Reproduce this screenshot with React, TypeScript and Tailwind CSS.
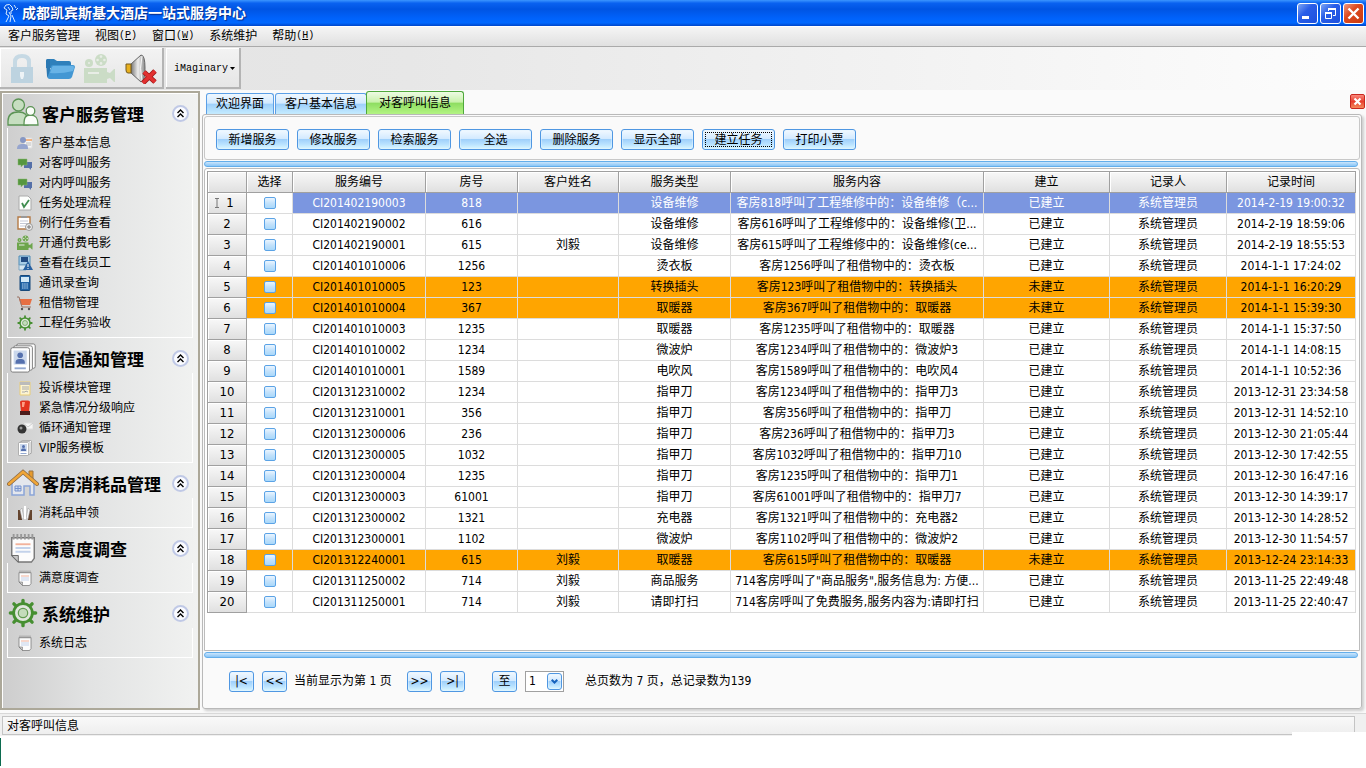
import React, { useState } from 'react';

const menus = [
  { label: '客户服务管理' },
  { label: '视图', hotkey: 'P' },
  { label: '窗口', hotkey: 'W' },
  { label: '系统维护' },
  { label: '帮助', hotkey: 'H' },
];

const sections = [
  {
    title: '客户服务管理',
    icon: 'users',
    items: [
      { icon: 'contact', label: '客户基本信息' },
      { icon: 'chat', label: '对客呼叫服务' },
      { icon: 'chat', label: '对内呼叫服务' },
      { icon: 'check', label: '任务处理流程' },
      { icon: 'clipboard', label: '例行任务查看' },
      { icon: 'camera', label: '开通付费电影' },
      { icon: 'online', label: '查看在线员工' },
      { icon: 'phone', label: '通讯录查询' },
      { icon: 'cart', label: '租借物管理' },
      { icon: 'gear', label: '工程任务验收' },
    ],
  },
  {
    title: '短信通知管理',
    icon: 'cards',
    items: [
      { icon: 'memo', label: '投诉模块管理' },
      { icon: 'alarm', label: '紧急情况分级响应' },
      { icon: 'loop', label: '循环通知管理' },
      { icon: 'cards', label: 'VIP服务模板' },
    ],
  },
  {
    title: '客房消耗品管理',
    icon: 'house',
    items: [{ icon: 'supplies', label: '消耗品申领' }],
  },
  {
    title: '满意度调查',
    icon: 'notepad',
    items: [{ icon: 'notepad', label: '满意度调查' }],
  },
  {
    title: '系统维护',
    icon: 'gear',
    items: [{ icon: 'notepad', label: '系统日志' }],
  },
];

const tabs = ['欢迎界面', '客户基本信息', '对客呼叫信息'];

const actions = ['新增服务', '修改服务', '检索服务', '全选', '删除服务', '显示全部', '建立任务', '打印小票'];

const columns = [
  { title: '选择', width: 'w-[46px]' },
  { title: '服务编号', width: 'w-[133px]' },
  { title: '房号', width: 'w-[92px]' },
  { title: '客户姓名', width: 'w-[101px]' },
  { title: '服务类型', width: 'w-[112px]' },
  { title: '服务内容', width: 'w-[253px]' },
  { title: '建立', width: 'w-[126px]' },
  { title: '记录人', width: 'w-[117px]' },
  { title: '记录时间', width: 'w-[129px]' },
];

// code, room, guest, type, content, status, time
const calls = [
  ['CI201402190003', '818', '', '设备维修', '客房818呼叫了工程维修中的：设备维修（c...', '已建立', '2014-2-19 19:00:32'],
  ['CI201402190002', '616', '', '设备维修', '客房616呼叫了工程维修中的：设备维修(卫...', '已建立', '2014-2-19 18:59:06'],
  ['CI201402190001', '615', '刘毅', '设备维修', '客房615呼叫了工程维修中的：设备维修(ce...', '已建立', '2014-2-19 18:55:53'],
  ['CI201401010006', '1256', '', '烫衣板', '客房1256呼叫了租借物中的：烫衣板', '已建立', '2014-1-1 17:24:02'],
  ['CI201401010005', '123', '', '转换插头', '客房123呼叫了租借物中的：转换插头', '未建立', '2014-1-1 16:20:29'],
  ['CI201401010004', '367', '', '取暖器', '客房367呼叫了租借物中的：取暖器', '未建立', '2014-1-1 15:39:30'],
  ['CI201401010003', '1235', '', '取暖器', '客房1235呼叫了租借物中的：取暖器', '已建立', '2014-1-1 15:37:50'],
  ['CI201401010002', '1234', '', '微波炉', '客房1234呼叫了租借物中的：微波炉3', '已建立', '2014-1-1 14:08:15'],
  ['CI201401010001', '1589', '', '电吹风', '客房1589呼叫了租借物中的：电吹风4', '已建立', '2014-1-1 10:52:36'],
  ['CI201312310002', '1234', '', '指甲刀', '客房1234呼叫了租借物中的：指甲刀3', '已建立', '2013-12-31 23:34:58'],
  ['CI201312310001', '356', '', '指甲刀', '客房356呼叫了租借物中的：指甲刀', '已建立', '2013-12-31 14:52:10'],
  ['CI201312300006', '236', '', '指甲刀', '客房236呼叫了租借物中的：指甲刀3', '已建立', '2013-12-30 21:05:44'],
  ['CI201312300005', '1032', '', '指甲刀', '客房1032呼叫了租借物中的：指甲刀10', '已建立', '2013-12-30 17:42:55'],
  ['CI201312300004', '1235', '', '指甲刀', '客房1235呼叫了租借物中的：指甲刀1', '已建立', '2013-12-30 16:47:16'],
  ['CI201312300003', '61001', '', '指甲刀', '客房61001呼叫了租借物中的：指甲刀7', '已建立', '2013-12-30 14:39:17'],
  ['CI201312300002', '1321', '', '充电器', '客房1321呼叫了租借物中的：充电器2', '已建立', '2013-12-30 14:28:52'],
  ['CI201312300001', '1102', '', '微波炉', '客房1102呼叫了租借物中的：微波炉2', '已建立', '2013-12-30 11:54:57'],
  ['CI201312240001', '615', '刘毅', '取暖器', '客房615呼叫了租借物中的：取暖器', '未建立', '2013-12-24 23:14:33'],
  ['CI201311250002', '714', '刘毅', '商品服务', '714客房呼叫了"商品服务",服务信息为: 方便...', '已建立', '2013-11-25 22:49:48'],
  ['CI201311250001', '714', '刘毅', '请即打扫', '714客房呼叫了免费服务,服务内容为:请即打扫', '已建立', '2013-11-25 22:40:47'],
];

const glossy =
  'rounded-[3px] border border-[#4f97e2] bg-[linear-gradient(#f2f9ff,#d3eaff_45%,#9fd0fb_50%,#b9e2ff_75%,#dcf8ff)] shadow-[inset_0_0_0_1px_#e4f3ff80]';

function CameraIcon({ className, color = '#6da54c' }: { className: string; color?: string }) {
  return (
    <svg viewBox="0 0 32 30" className={className} fill={color}>
      <circle cx="5" cy="9" r="4" />
      <circle cx="17" cy="6" r="6" />
      <g fill="#e8ede6">
        <circle cx="5" cy="9" r="1" />
        <circle cx="17" cy="2.6" r="1.3" />
        <circle cx="13.6" cy="6" r="1.3" />
        <circle cx="20.4" cy="6" r="1.3" />
        <circle cx="17" cy="9.4" r="1.3" />
      </g>
      <path d="M0 14h23v4l3 1 4-4h1v13h-1l-4-4-3 1v4H0z" />
      <path d="M4 18h11v2H4z" fill="#e8ede6" />
    </svg>
  );
}

function NavIcon({ name, className }: { name: string; className: string }) {
  switch (name) {
    case 'users':
      return (
        <svg viewBox="0 0 32 30" className={className} strokeWidth="1.3">
          <g fill="#c6dec0" stroke="#5c9455">
            <circle cx="11.5" cy="7" r="6" />
            <path d="M1 27v-4c0-6 4-9 10.5-9S21 17 21 23v4z" />
          </g>
          <g fill="#fafdf9" stroke="#5c9455">
            <path d="M17 27c0-7 1-10 6.5-10S31 20 31 27z" />
            <circle cx="23.5" cy="13" r="4.3" />
          </g>
        </svg>
      );
    case 'cards':
      return (
        <svg viewBox="0 0 30 32" className={className} fill="#fff" stroke="#777" strokeWidth="1">
          <rect x="8" y="1" width="20" height="26" rx="2" />
          <rect x="5" y="3" width="20" height="26" rx="2" />
          <rect x="2" y="5" width="20" height="26" rx="2" />
          <rect x="5" y="8" width="14" height="15" fill="#cbd8ec" stroke="none" />
          <circle cx="12" cy="13" r="3" fill="#5470ae" stroke="none" />
          <path d="M7 22c0-4 1-5 5-5s5 1 5 5z" fill="#5470ae" stroke="none" />
          <path d="M6 27h12" stroke="#93a9d1" strokeWidth="2" />
        </svg>
      );
    case 'house':
      return (
        <svg viewBox="0 0 32 28" className={className}>
          <path d="M22 2h4v9l-4-4z" fill="#e79b2d" stroke="#9c7440" />
          <path d="M5 14 16 4l11 10v12h-4v-9h-6v9H5z" fill="#e4e7ed" stroke="#8ba5d8" strokeWidth="1.5" />
          <path d="M8 17h6v5H8z" fill="#cedbf1" stroke="#7692cc" />
          <path d="M11 17v5M8 19.500h6" stroke="#7692cc" />
          <path d="M2 15 16 3l14 12" fill="none" stroke="#8c6c48" strokeWidth="4" strokeLinecap="round" />
          <path d="M2 15 16 3l14 12" fill="none" stroke="#f0a638" strokeWidth="2.5" strokeLinecap="round" />
        </svg>
      );
    case 'notepad':
      return (
        <svg viewBox="0 0 28 32" className={className}>
          <path d="M2 5h24v22l-3 4H9l-7-7z" fill="#fcfcfc" stroke="#777" strokeWidth="1.5" />
          <path d="M2 24h7v7z" fill="#c7c7c7" stroke="#666" />
          <path d="M4 1v6M8 1v6M12 1v6M16 1v6M20 1v6M24 1v6" stroke="#999" strokeWidth="2" />
          <path d="M6 12h16" stroke="#f2b29b" strokeWidth="2" />
          <path d="M6 16h16M6 20h16" stroke="#c3d2ea" strokeWidth="2" />
        </svg>
      );
    case 'gear':
      return (
        <svg viewBox="0 0 32 32" className={className} fill="none">
          <path
            d="M16 2.500v27M2.500 16h27M6.300 6.300l19.400 19.400M25.700 6.300 6.300 25.700"
            stroke="#468f31"
            strokeWidth="3.6"
            strokeLinecap="round"
          />
          <circle cx="16" cy="16" r="10" fill="#e0e7dd" stroke="#468f31" strokeWidth="3" />
          <circle cx="16" cy="16" r="5" fill="#c4dcbb" stroke="#629b50" strokeWidth="1.3" />
        </svg>
      );
    case 'contact':
      return (
        <svg viewBox="0 0 16 16" className={className}>
          <path d="M7 3h8v10H7z" fill="#f7f7f7" stroke="#ddd" />
          <path d="M8 5h7" stroke="#f0a060" strokeWidth="1.5" />
          <path d="M9 8h5M9 10h5" stroke="#bbb" />
          <circle cx="6" cy="5" r="3" fill="#8797c3" />
          <path d="M0 14c0-4 2-5 6-5s5 1 5 5z" fill="#96a5ce" />
        </svg>
      );
    case 'chat':
      return (
        <svg viewBox="0 0 16 16" className={className}>
          <path d="M7 7h8v6h-1v2l-2-2H7z" fill="#5570a8" />
          <path d="M1 4h9v6H6l-2 2v-2H1z" fill="#56963f" stroke="#8ab870" strokeWidth="0.5" />
        </svg>
      );
    case 'check':
      return (
        <svg viewBox="0 0 16 16" className={className}>
          <path d="M2 1h9l3 3v11H2z" fill="#fcfefc" stroke="#aaa" />
          <path d="m5 8 2 4 5-7" fill="none" stroke="#3d8c4d" strokeWidth="1.8" />
        </svg>
      );
    case 'clipboard':
      return (
        <svg viewBox="0 0 16 16" className={className}>
          <path d="M1 2h12v12H1z" fill="#fff" stroke="#b47a45" strokeWidth="1.4" />
          <path d="M4 1h6v2H4z" fill="#999" />
          <path d="M3 6h8M3 8.500h8M3 11h5" stroke="#c5c9d5" />
          <circle cx="12" cy="12" r="3.5" fill="#eee" stroke="#999" />
          <path d="M10 12h4M12 10v4" stroke="#777" />
        </svg>
      );
    case 'camera':
      return <CameraIcon className={className} />;
    case 'online':
      return (
        <svg viewBox="0 0 16 16" className={className}>
          <path d="M2 1h11v9H2z" fill="#a8cce6" stroke="#4e8bb5" />
          <path d="M4 2h7v5H4z" fill="#224b82" />
          <path d="M2 10h7v5H2z" fill="#d6e6f2" stroke="#7ea5c1" />
          <path d="m11 6 5 9H6z" fill="#2861a2" />
          <path d="M11 9v3M11 13v1" stroke="#fff" />
        </svg>
      );
    case 'phone':
      return (
        <svg viewBox="0 0 16 16" className={className}>
          <rect x="3" y="0.5" width="10" height="15" rx="1" fill="#2164a5" stroke="#17497a" />
          <path d="M4 2h8v5H4z" fill="#d3eaf7" />
          <path d="M5 9h6M5 11h6M5 13h6" stroke="#b8d6f0" strokeDasharray="1.5 0.7" />
        </svg>
      );
    case 'cart':
      return (
        <svg viewBox="0 0 16 16" className={className}>
          <path d="M2 4h13l-2 6H4z" fill="#e66f43" />
          <path d="M0 2h2l3 10h9" fill="none" stroke="#9b7467" />
          <circle cx="5" cy="14" r="1.2" fill="#555" />
          <circle cx="12" cy="14" r="1.2" fill="#555" />
        </svg>
      );
    case 'memo':
      return (
        <svg viewBox="0 0 16 16" className={className}>
          <path d="M3 2h10v13H3z" fill="#fcf4d2" stroke="#e9cd77" />
          <path d="M3 2h10v3H3z" fill="#bbb" />
          <path d="M5 7h7M5 9h7M5 12h3l1-1 2 1" fill="none" stroke="#aaa" />
        </svg>
      );
    case 'alarm':
      return (
        <svg viewBox="0 0 16 16" className={className}>
          <path d="M3 2q0-1.500 2-1.500h6q2 0 2 1.500l-1 10H4z" fill="#e2341f" />
          <path d="M5 2h3L7 7H5z" fill="#ff9d84" />
          <path d="M3 11h10v4H3z" fill="#4d1d1b" />
        </svg>
      );
    case 'loop':
      return (
        <svg viewBox="0 0 16 16" className={className}>
          <path d="M6 3h10v6H6z" fill="#f6f6f6" stroke="#ddd" />
          <path d="m6 3 5 4 5-4" fill="none" stroke="#ccc" />
          <circle cx="5" cy="9" r="4.5" fill="#343434" />
          <circle cx="4" cy="8" r="1.5" fill="#999" />
        </svg>
      );
    default:
      return (
        <svg viewBox="0 0 16 16" className={className}>
          <path d="M1 5h4v10H1zM11 5h4v10h-4z" fill="#65452f" />
          <path d="m3 5 2-2 2 11H5zM13 5l-2-2-2 11h2z" fill="#f5f5f5" stroke="#999" strokeWidth="0.5" />
          <path d="M7 1h2v13H7z" fill="#fff" />
        </svg>
      );
  }
}

function TitleBar() {
  const box = 'flex h-[21px] w-[21px] items-center justify-center rounded-[3px] border border-white';
  return (
    <header className="flex h-[26px] items-center bg-[linear-gradient(#3c96ff,#0a62f0_12%,#0054e3_35%,#0062fb_70%,#0068ff_88%,#0045c8)] pr-[2px] pl-[3px]">
      <svg viewBox="0 0 16 20" className="h-[20px] w-[16px]" fill="none" stroke="#d9ecff" strokeWidth="1">
        <path d="M3 2q4-2 6 2l1 3-2 1v3M3 2 1 5l3 2-1 4 3 2-3 6M6 9l2 4-1 6M9 12l3 7M11 2l2 3M13 7l2-2M5 4l2 3" />
      </svg>
      <h1 className="ml-[3px] flex-1 text-[14px] leading-[20px] font-bold text-white [text-shadow:1px_1px_1px_#062b86]">
        成都凯宾斯基大酒店一站式服务中心
      </h1>
      <div className="flex gap-[2px]">
        <button aria-label="最小化" className={`${box} bg-[linear-gradient(135deg,#7ea6f5,#2a5ee8_40%,#1d50dd)]`}>
          <svg viewBox="0 0 19 19" className="h-[19px] w-[19px]">
            <path d="M4 12h7v3H4z" fill="#fff" />
          </svg>
        </button>
        <button aria-label="还原" className={`${box} bg-[linear-gradient(135deg,#7ea6f5,#2a5ee8_40%,#1d50dd)]`}>
          <svg viewBox="0 0 19 19" className="h-[19px] w-[19px]" fill="none" stroke="#fff">
            <path d="M7.500 7V5M14.500 4v7.500H12" />
            <path d="M7 5h8" strokeWidth="2" />
            <path d="M4.500 9v5.500h6V9" />
            <path d="M4 9h7" strokeWidth="2" />
          </svg>
        </button>
        <button aria-label="关闭" className={`${box} bg-[linear-gradient(135deg,#f09a80,#dd4a20_40%,#c93a10)]`}>
          <svg viewBox="0 0 19 19" className="h-[19px] w-[19px]" stroke="#fff" strokeWidth="2.4">
            <path d="m4.500 4.500 10 10M14.500 4.500l-10 10" />
          </svg>
        </button>
      </div>
    </header>
  );
}

function Toolbar() {
  const group =
    'flex items-center border-r-2 border-b-2 border-[#b4b4b4] bg-[linear-gradient(#f3f3f3,#e6e6e6)] shadow-[inset_1px_1px_0_#fff]';
  return (
    <div className="flex h-[43px] gap-[2px] bg-[linear-gradient(90deg,#e3e3e3,#e7e7e7_30%,#fdfdfd)] pt-px pb-px">
      <div className={`${group} w-[164px] gap-[9px] pt-[2px] pl-[10px]`}>
        <button aria-label="锁定">
          <svg viewBox="0 0 24 30" className="h-[30px] w-[24px]">
            <path d="M5 14V8q0-6 7-6t7 6v6" fill="none" stroke="#c6d9e4" strokeWidth="4" />
            <rect x="1" y="13" width="22" height="16" fill="#bdd3e0" />
            <path d="M10 18h4v4l-1 3h-2l-1-3z" fill="#edf3f6" />
          </svg>
        </button>
        <button aria-label="打开">
          <svg viewBox="0 0 32 24" className="h-[24px] w-[32px]">
            <path d="M3 4q0-2 2-2h6l3 2h12q2 0 2 2v5H3z" fill="#2f80bb" />
            <path d="M3 4q0-2 2-2h2v19H6q-2 0-2-2z" fill="#2b78b2" />
            <path d="M10 8h20q2 0 2 2l-3 10q-1 2-3 2H7q-3 0-2-3l3-9q0-2 2-2z" fill="#4397d3" />
            <path d="M10 9h20q1 0 1 2l-1 3q-12 3-23 2l2-6z" fill="#68b3e6" />
          </svg>
        </button>
        <button aria-label="影片">
          <CameraIcon className="h-[30px] w-[32px]" color="#cbdcc6" />
        </button>
        <button aria-label="静音">
          <svg viewBox="0 0 32 30" className="h-[30px] w-[32px]">
            <defs>
              <linearGradient id="horn" x1="0" x2="1">
                <stop offset="0" stopColor="#777" />
                <stop offset="0.5" stopColor="#eee" />
                <stop offset="1" stopColor="#8b8b8b" />
              </linearGradient>
            </defs>
            <path d="M6 10 16 1q4 0 4 13t-4 14L6 19z" fill="url(#horn)" stroke="#666" />
            <path d="M17 2q-3 12 0 25" fill="none" stroke="#f7f7f7" />
            <path d="M1 10h5v9H3q-2 0-2-3z" fill="#e8b01e" stroke="#755a20" />
            <path d="m19 18 11 10M30 17 18 29" stroke="#9f1818" strokeWidth="5" />
            <path d="m19 18 11 10M30 17 18 29" stroke="#e23030" strokeWidth="3.4" />
          </svg>
        </button>
      </div>
      <div className={`${group} w-[75px] pt-[2px] pl-[8px]`}>
        <button className="flex items-center gap-[2px] font-['Liberation_Mono',monospace] text-[10px] leading-[14px]">
          iMaginary
          <svg viewBox="0 0 5 3" className="h-[3px] w-[5px]">
            <path d="M0 0h5L2.500 3z" />
          </svg>
        </button>
      </div>
    </div>
  );
}

function Sidebar() {
  return (
    <aside className="mb-[3px] w-[200px] shrink-0 border-2 border-[#aca899] bg-[linear-gradient(90deg,#cdcdcd,#e2e3e3_45%,#f1f2f1)] px-[5px] shadow-[inset_1px_1px_0_#fff]">
      {sections.map((section) => (
        <section key={section.title}>
          <div className="flex h-[35px] items-center pt-[5px]">
            <NavIcon name={section.icon} className="h-[30px] w-[32px]" />
            <h2 className="ml-[3px] flex-1 pt-[3px] text-[17px] leading-[24px] font-bold">{section.title}</h2>
            <button
              aria-label={`收起${section.title}`}
              className="mr-[4px] flex h-[17px] w-[17px] items-center justify-center rounded-full border-2 border-[#c0c9e6] bg-[#fafbff]"
            >
              <svg viewBox="0 0 9 9" className="h-[9px] w-[9px]" fill="none" stroke="#000" strokeWidth="1.4">
                <path d="m1.500 4 3-3 3 3M1.500 8l3-3 3 3" />
              </svg>
            </button>
          </div>
          <ul className="border-x border-b border-white pt-[5px] pb-[4px]">
            {section.items.map((item) => (
              <li key={item.label}>
                <a href="#" className="flex h-[20px] items-center gap-[6px] pl-[9px] whitespace-nowrap">
                  <NavIcon name={item.icon} className="h-[16px] w-[16px]" />
                  {item.label}
                </a>
              </li>
            ))}
          </ul>
        </section>
      ))}
    </aside>
  );
}

function Splitter() {
  return (
    <div className="mr-[2px] h-[6px] shrink-0 rounded-[3px] border border-[#64aeea] bg-[linear-gradient(#cde6fb,#a9d5fa_50%,#8bc6f6)]" />
  );
}

function CallTable() {
  const head =
    'border-r border-b border-[#a0a0a0] bg-[linear-gradient(#f8f8f8,#ececec_50%,#e0e0e0)] font-normal shadow-[inset_1px_1px_0_#fff]';
  return (
    <table className="w-full table-fixed border-separate border-spacing-0 border-t border-l border-[#a0a0a0] text-center leading-[18px]">
      <thead>
        <tr className="h-[21px]">
          <th className={`${head} w-[39px] p-0`} />
          {columns.map((column) => (
            <th key={column.title} className={`${head} ${column.width} p-0`}>
              {column.title}
            </th>
          ))}
        </tr>
      </thead>
      <tbody>
        {calls.map(([code, room, guest, type, content, status, time], index) => {
          const selected = index === 0;
          const pending = status === '未建立';
          const cell = `border-r border-b border-[#dcdcdc] p-0 whitespace-nowrap overflow-hidden ${
            pending ? 'bg-[#ffa500]' : ''
          } ${selected ? 'bg-[#7b96e0] text-white' : ''}`;
          return (
            <tr key={code} className="h-[21px]">
              <th className={`${head} p-0 text-[13px]`}>
                <div className="flex items-center justify-center gap-[4px]">
                  {selected && (
                    <svg viewBox="0 0 6 10" className="-ml-[8px] h-[10px] w-[10px]" fill="none" stroke="#777">
                      <path d="M1 .5h4M3 .5v9M1 9.500h4" />
                    </svg>
                  )}
                  {index + 1}
                </div>
              </th>
              <td className={`border-r border-b border-[#dcdcdc] p-0 ${pending ? 'bg-[#ffa500]' : ''}`}>
                <input
                  type="checkbox"
                  aria-label={`选择 ${code}`}
                  className="mx-auto block h-[12px] w-[12px] appearance-none rounded-[2px] border border-[#5ba3e6] bg-[linear-gradient(#eaf5ff,#c4e2fb_50%,#a9d8fa)] checked:bg-[#3f8ede]"
                />
              </td>
              <td className={cell}>{code}</td>
              <td className={cell}>{room}</td>
              <td className={cell}>{guest}</td>
              <td className={cell}>{type}</td>
              <td className={cell}>{content}</td>
              <td className={cell}>{status}</td>
              <td className={cell}>系统管理员</td>
              <td className={cell}>{time}</td>
            </tr>
          );
        })}
      </tbody>
    </table>
  );
}

function Pager() {
  const button = `${glossy} h-[21px] w-[25px] leading-[18px]`;
  return (
    <div className="flex h-[49px] shrink-0 items-center pb-[3px] pl-[25px]">
      <button className={button}>|&lt;</button>
      <button className={`${button} ml-[8px]`}>&lt;&lt;</button>
      <span className="ml-[7px] w-[113px]">当前显示为第 1 页</span>
      <button className={button}>&gt;&gt;</button>
      <button className={`${button} ml-[8px]`}>&gt;|</button>
      <button className={`${button} ml-[27px]`}>至</button>
      <label className="relative ml-[8px] block">
        <select
          aria-label="页码"
          defaultValue="1"
          className="block h-[21px] w-[39px] appearance-none border border-[#a0a0a0] bg-white pl-[3px] leading-[18px]"
        >
          {[1, 2, 3, 4, 5, 6, 7].map((page) => (
            <option key={page}>{page}</option>
          ))}
        </select>
        <span className={`${glossy} pointer-events-none absolute top-[2px] right-[2px] flex h-[17px] w-[15px] items-center justify-center`}>
          <svg viewBox="0 0 7 5" className="h-[5px] w-[7px]" fill="none" stroke="#1563bd" strokeWidth="2">
            <path d="m.7.700 2.800 2.800L6.300.700" />
          </svg>
        </span>
      </label>
      <span className="ml-[21px]">总页数为 7 页，总记录数为139</span>
    </div>
  );
}

export default function App() {
  const [active, setActive] = useState(2);

  return (
    <div className="flex min-h-screen flex-col bg-white font-['DejaVu_Sans_Condensed','Noto_Sans_CJK_SC',sans-serif] text-[12px] leading-[18px] text-black">
      <TitleBar />
      <nav className="flex h-[21px] items-center gap-[15px] border-b border-[#aaa] bg-[linear-gradient(#f6f6f6,#e0e0e0)] pl-[8px] shadow-[inset_0_1px_0_#fff]">
        {menus.map((menu) => (
          <button key={menu.label} className="flex items-center">
            {menu.label}
            {menu.hotkey && (
              <span className="font-['Liberation_Mono',monospace] text-[10px]">
                (<u>{menu.hotkey}</u>)
              </span>
            )}
          </button>
        ))}
      </nav>
      <Toolbar />

      <div className="flex flex-1 bg-[#fafafa] pt-px">
        <Sidebar />
        <main className="flex min-w-0 flex-1 flex-col pr-[4px] pl-[2px]">
          <div className="flex h-[23px] items-end pl-[4px]" role="tablist">
            {tabs.map((tab, index) => (
              <button
                key={tab}
                role="tab"
                aria-selected={active === index}
                onClick={() => setActive(index)}
                className={
                  active === index
                    ? '-ml-[2px] h-[23px] rounded-t-[3px] border border-b-0 border-[#4fa83c] bg-[linear-gradient(#eefbe4,#c9f2ac_45%,#8fde62_52%,#b4f584)] px-[12px]'
                    : 'mr-px h-[21px] rounded-t-[3px] border border-b-0 border-[#5b9fe6] bg-[linear-gradient(#eef7ff,#d3eaff_45%,#9fd0fb_52%,#c5ecff)] px-[9px]'
                }
              >
                {tab}
              </button>
            ))}
            <button
              aria-label="关闭标签"
              className="mb-[5px] -mr-[3px] ml-auto flex h-[15px] w-[15px] items-center justify-center rounded-[2px] border border-[#c8281f] bg-[linear-gradient(#f9887c,#e8402f_50%,#f58a5a)]"
            >
              <svg viewBox="0 0 9 9" className="h-[9px] w-[9px]" stroke="#fff" strokeWidth="2.2">
                <path d="m1.500 1.500 6 6M7.500 1.500l-6 6" />
              </svg>
            </button>
          </div>

          <div className="mb-[4px] flex flex-1 flex-col rounded-[3px] border border-[#b9b9b9] p-px shadow-[2px_2px_3px_#ccc]">
            <div className="mb-px flex h-[44px] shrink-0 items-center gap-[8px] rounded-[3px] border border-[#c8c8c8] pt-[3px] pl-[11px]">
              {actions.map((action) => (
                <button
                  key={action}
                  className={`${glossy} h-[21px] w-[73px] leading-[18px] ${
                    action === '建立任务' ? 'outline-1 -outline-offset-4 outline-black outline-dotted' : ''
                  }`}
                >
                  {action}
                </button>
              ))}
            </div>
            <Splitter />
            <div className="mt-px mb-px flex-1 rounded-t-[3px] border border-[#bcbcbc] bg-white pt-[2px] pr-[3px] pb-[20px] pl-[2px]">
              <CallTable />
            </div>
            <Splitter />
            <Pager />
          </div>
        </main>
      </div>

      <footer className="relative flex h-[23px] border-t border-[#d8d8d8] bg-[#f0f0f0] pt-[2px] pr-[11px] pb-px pl-[2px]">
        <div className="flex flex-1 items-center border border-[#c4c4c4] bg-[linear-gradient(#f9f9f9,#eee)] pl-[4px]">对客呼叫信息</div>
        <div className="absolute right-0 bottom-0 h-[4px] w-[74px] bg-white" />
      </footer>
      <div className="flex h-[32px] items-start">
        <div className="mt-[2px] h-[28px] w-px bg-[#0c6b4f]" />
      </div>
    </div>
  );
}
